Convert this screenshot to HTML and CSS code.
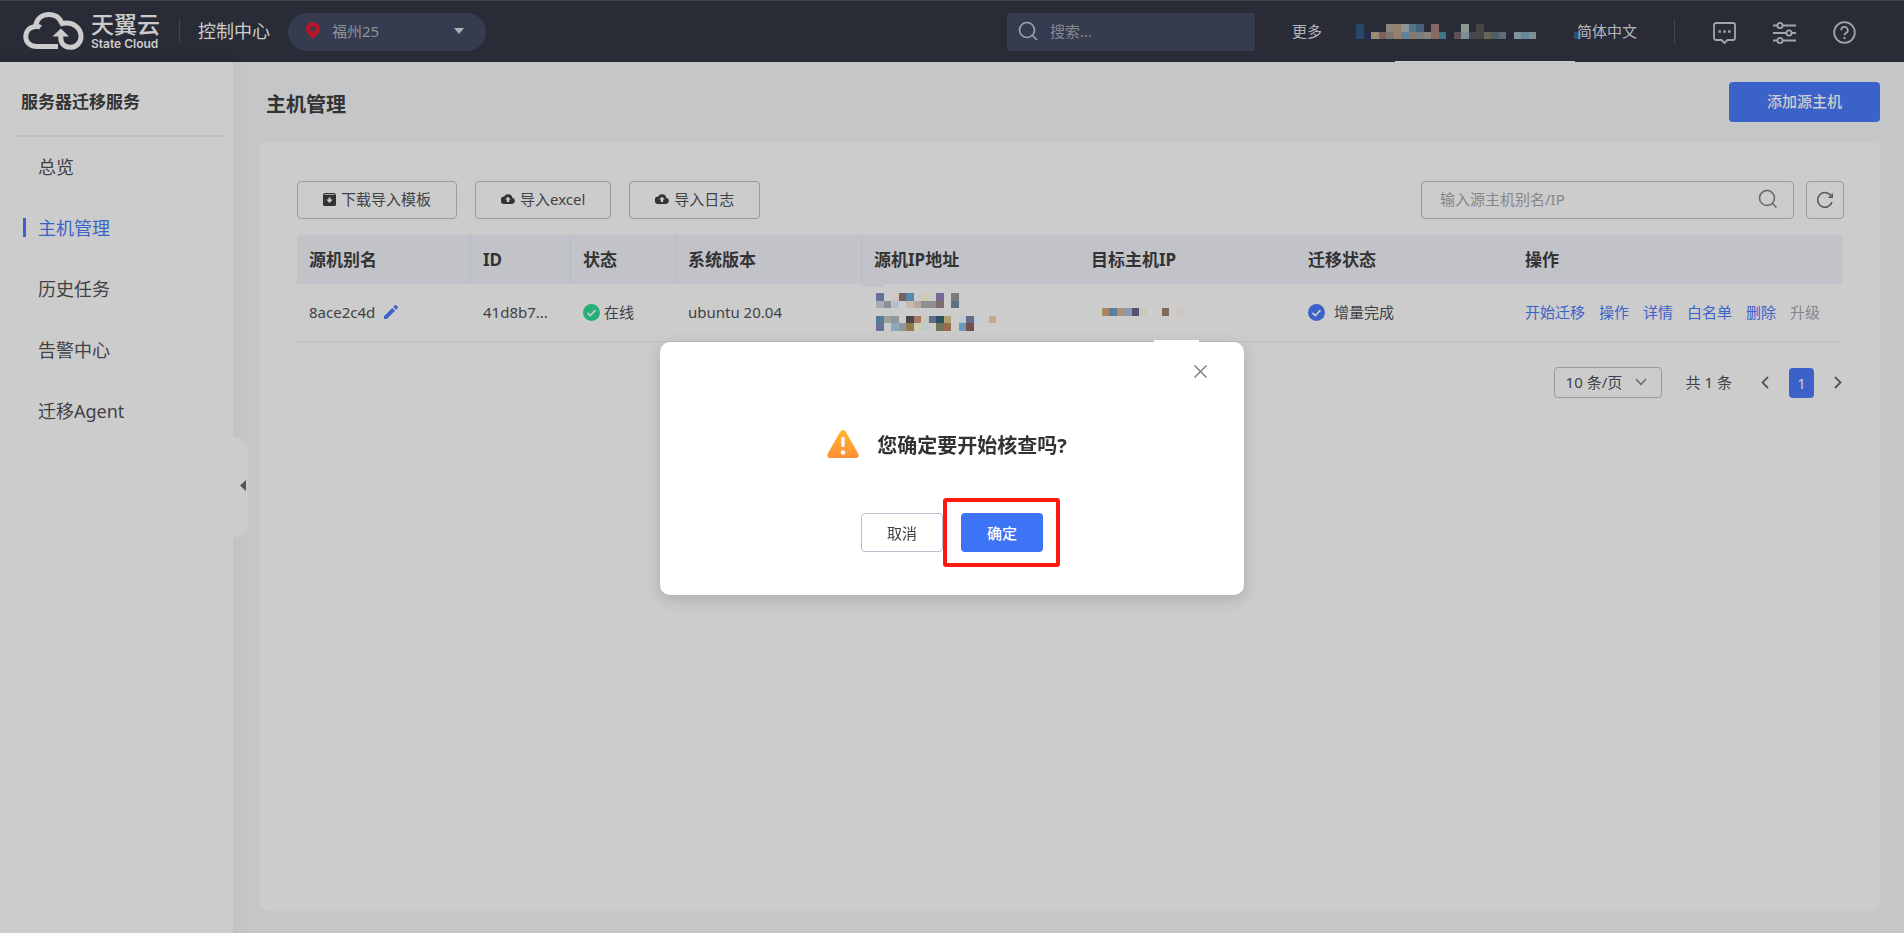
FILE: index.html
```html
<!DOCTYPE html>
<html lang="zh-CN">
<head>
<meta charset="utf-8">
<title>主机管理</title>
<link rel="stylesheet" href="styles.css">
</head>
<body>
<header class="topbar">
  <a class="logo" href="#">
    <svg width="61" height="38" viewBox="0 0 61 38" fill="none" stroke="#cccccc" stroke-width="5">
      <path d="M35 34.5H14C7 34.5 2.8 30 2.8 25C2.8 18.5 7 15 12.5 14.5C13.5 7 19 2.6 26 2.6C33 2.6 37 6.5 39 11.5M12.5 14.5C14 14 16 14.5 17.5 15.5M37 12C50 8.5 58 16 58 24.5C58 31 53 35.3 47.5 35.3C41 35.3 37.8 31 37.8 26V22"/>
      <path d="M37.8 16.5L46 24.5H29.5Z" fill="#cccccc" stroke="none"/>
    </svg>
    <span class="logo-text"><span class="logo-cn">天翼云</span><span class="logo-en">State Cloud</span></span>
  </a>
  <span class="divider"></span>
  <a class="console" href="#">控制中心</a>
  <button class="region" type="button">
    <svg width="14" height="17" viewBox="0 0 14 17"><path fill="#b8142c" fill-rule="evenodd" d="M7 0C3 0 0 3 0 6.8C0 10.500 3.500 13.500 7 17C10.500 13.500 14 10.500 14 6.800C14 3 11 0 7 0zM7 4.200a2.600 2.600 0 1 0 0 5.200a2.600 2.600 0 0 0 0-5.200z"/></svg>
    <span class="region-name">福州25</span>
    <svg width="10" height="6" viewBox="0 0 10 6"><path fill="#aeb0b6" d="M0 0h10L5 6z"/></svg>
  </button>
  <label class="global-search">
    <svg width="20" height="20" viewBox="0 0 20 20" fill="none" stroke="#a4a6ad" stroke-width="1.6"><circle cx="9" cy="9" r="7.5"/><path d="M14.5 14.5L19 19"/></svg>
    <input type="text" placeholder="搜索..." aria-label="搜索">
  </label>
  <a class="toplink" href="#">更多</a>
  <svg class="account" width="225" height="15" viewBox="0 0 30 2" shape-rendering="crispEdges">
    <rect x="0" width="1" height="2" fill="#26496b"/><rect x="1" y="1" width="1" height="1" fill="#252a4e"/><rect x="2" y="1" width="1" height="1" fill="#9c8b72"/><rect x="3" y="1" width="1" height="1" fill="#7d605f"/>
    <rect x="4" width="1" height="1" fill="#8b867f"/><rect x="4" y="1" width="1" height="1" fill="#7d7675"/><rect x="5" width="1" height="2" fill="#98806a"/><rect x="6" width="1" height="1" fill="#8a9699"/><rect x="6" y="1" width="1" height="1" fill="#5f8298"/>
    <rect x="7" width="1" height="1" fill="#547585"/><rect x="7" y="1" width="1" height="1" fill="#8a7866"/><rect x="8" width="1" height="1" fill="#4a5f7c"/><rect x="8" y="1" width="1" height="1" fill="#7b7b80"/><rect x="9" y="1" width="1" height="1" fill="#88837c"/>
    <rect x="10" width="1" height="2" fill="#866a63"/><rect x="11" y="1" width="1" height="1" fill="#417389"/><rect x="13" y="1" width="1" height="1" fill="#644f58"/><rect x="14" width="1" height="1" fill="#8d9994"/><rect x="14" y="1" width="1" height="1" fill="#7a909a"/>
    <rect x="15" y="1" width="1" height="1" fill="#464753"/><rect x="16" width="1" height="2" fill="#464648"/><rect x="17" y="1" width="1" height="1" fill="#6a6659"/><rect x="18" y="1" width="1" height="1" fill="#4c6165"/><rect x="19" y="1" width="1" height="1" fill="#646b78"/>
    <rect x="21" y="1" width="1" height="1" fill="#7e949d"/><rect x="22" y="1" width="1" height="1" fill="#66869a"/><rect x="23" y="1" width="1" height="1" fill="#84908f"/><rect x="29" y="1" width="1" height="1" fill="#2a526c"/>
  </svg>
  <a class="toplink lang" href="#">简体中文</a>
  <span class="divider tools-divider"></span>
  <div class="tools">
    <button type="button" aria-label="消息"><svg width="23" height="22" viewBox="0 0 23 22" fill="none" stroke="#a4a5ab" stroke-width="1.8"><path d="M3 1h17a2 2 0 0 1 2 2v13a2 2 0 0 1-2 2h-5.500L11.500 21l-3-3H3a2 2 0 0 1-2-2V3a2 2 0 0 1 2-2z"/><path d="M5.500 9.500h2.400M10.300 9.500h2.400M15.100 9.500h2.400" stroke-width="2.4"/></svg></button>
    <button type="button" aria-label="设置"><svg width="23" height="22" viewBox="0 0 23 22" fill="none" stroke="#a4a5ab" stroke-width="1.8"><path d="M0 3.500h4M10 3.500h13M0 11h13M19 11h4M0 18.500h4M10 18.500h13"/><circle cx="7" cy="3.5" r="2.6"/><circle cx="16" cy="11" r="2.6"/><circle cx="7" cy="18.5" r="2.6"/></svg></button>
    <button type="button" aria-label="帮助"><svg width="23" height="23" viewBox="0 0 23 23" fill="none" stroke="#a4a5ab" stroke-width="1.8"><circle cx="11.5" cy="11.5" r="10.3"/><path d="M8.200 9.200a3.300 3.300 0 1 1 4.900 2.800c-1.100.6-1.600 1.100-1.600 2.300"/><path d="M11.500 16v2"/></svg></button>
  </div>
</header>

<div class="layout">
  <aside class="sidebar">
    <h2 class="service">服务器迁移服务</h2>
    <nav class="menu">
      <a href="#">总览</a>
      <a href="#" class="active">主机管理</a>
      <a href="#">历史任务</a>
      <a href="#">告警中心</a>
      <a href="#">迁移Agent</a>
    </nav>
    <button class="collapse" type="button" aria-label="收起菜单"><svg width="6" height="11" viewBox="0 0 6 11"><path fill="#555" d="M6 0v11L0 5.500z"/></svg></button>
  </aside>

  <main class="main">
    <div class="page-head">
      <h1>主机管理</h1>
      <button class="add" type="button">添加源主机</button>
    </div>
    <section class="card">
      <div class="toolbar">
        <button class="btn" type="button"><svg width="13" height="13" viewBox="0 0 13 13"><path fill="#333" fill-rule="evenodd" d="M1.500 0h10L13 1.500v10a1.500 1.500 0 0 1-1.500 1.500h-10A1.500 1.500 0 0 1 0 11.500v-10zM1.500 1.200h10v.8h-10zM5.500 4.500v2H3.200l3.300 3.500 3.300-3.500H7.500v-2z"/></svg>下载导入模板</button>
        <button class="btn" type="button"><svg width="14" height="10" viewBox="0 0 14 10"><path fill="#333" fill-rule="evenodd" d="M11.300 3.700A4.400 4.400 0 0 0 3.100 2.600 3.700 3.700 0 0 0 3.500 10h7.600a3.200 3.200 0 0 0 .2-6.300zM8.200 5.600v2.500H5.800V5.600H4.200L7 2.800l2.800 2.800z"/></svg>导入excel</button>
        <button class="btn" type="button"><svg width="14" height="10" viewBox="0 0 14 10"><path fill="#333" fill-rule="evenodd" d="M11.300 3.700A4.400 4.400 0 0 0 3.100 2.600 3.700 3.700 0 0 0 3.500 10h7.600a3.200 3.200 0 0 0 .2-6.300zM8.200 5.600v2.500H5.800V5.600H4.200L7 2.800l2.800 2.800z"/></svg>导入日志</button>
        <label class="host-search">
          <input type="text" placeholder="输入源主机别名/IP" aria-label="输入源主机别名/IP">
          <svg width="20" height="20" viewBox="0 0 20 20" fill="none" stroke="#62646a" stroke-width="1.5"><circle cx="9" cy="9" r="7.5"/><path d="M14.500 14.500L18.500 18.500"/></svg>
        </label>
        <button class="refresh" type="button" aria-label="刷新"><svg width="18" height="18" viewBox="0 0 18 18" fill="none" stroke="#55575c" stroke-width="1.5"><path d="M15.300 5.200A7.300 7.300 0 1 0 16 11"/><path d="M16.200 2.500V6.200H12.500"/></svg></button>
      </div>

      <table class="hosts">
        <colgroup><col class="c-name"><col class="c-id"><col class="c-state"><col class="c-os"><col class="c-ip"><col class="c-ip"><col class="c-ip"><col></colgroup>
        <thead>
          <tr><th class="sep">源机别名</th><th class="sep">ID</th><th class="sep">状态</th><th class="sep">系统版本</th><th class="ip-head">源机IP地址</th><th>目标主机IP</th><th>迁移状态</th><th>操作</th></tr>
        </thead>
        <tbody>
          <tr>
            <td><span class="cell">8ace2c4d<button class="edit" type="button" aria-label="编辑"><svg width="14" height="14" viewBox="0 0 14 14" fill="#3b62c8"><path d="M0 11.200L8.300 2.900l2.800 2.800L2.800 14H0zM9.300 1.900L10.900.3a1 1 0 0 1 1.400 0l1.400 1.400a1 1 0 0 1 0 1.400l-1.600 1.600z"/></svg></button></span></td>
            <td>41d8b7...</td>
            <td><span class="cell tight"><svg width="17" height="17" viewBox="0 0 17 17"><circle cx="8.5" cy="8.5" r="8.5" fill="#25b07a"/><path d="M4.500 8.800l2.800 2.800 5.200-5.400" fill="none" stroke="#ccc" stroke-width="1.7"/></svg>在线</span></td>
            <td>ubuntu 20.04</td>
            <td>
              <svg class="masked" width="120" height="38" viewBox="0 0 16 5" preserveAspectRatio="none" shape-rendering="crispEdges">
                <rect x="0" width="1" height="1" fill="#66709a"/><rect x="2" width="1" height="1" fill="#cfc8c0"/><rect x="3" width="1" height="1" fill="#7a5f63"/><rect x="4" width="1" height="1" fill="#5888aa"/><rect x="6" width="1" height="1" fill="#cdc9b5"/><rect x="8" width="1" height="1" fill="#766795"/><rect x="10" width="1" height="1" fill="#767d80"/>
                <rect x="0" y="1" width="1" height="1" fill="#a5abb9"/><rect x="1" y="1" width="1" height="1" fill="#8f8f8f"/><rect x="2" y="1" width="1" height="1" fill="#b6c0c8"/><rect x="3" y="1" width="1" height="1" fill="#c3cfd3"/><rect x="4" y="1" width="1" height="1" fill="#c6bbab"/><rect x="5" y="1" width="1" height="1" fill="#bba6a3"/><rect x="6" y="1" width="2" height="1" fill="#8f8f8f"/><rect x="8" y="1" width="1" height="1" fill="#7b6f6d"/><rect x="10" y="1" width="1" height="1" fill="#5c7186"/>
                <rect x="0" y="3" width="1" height="1" fill="#557a98"/><rect x="1" y="3" width="1" height="1" fill="#9ba3a1"/><rect x="2" y="3" width="1" height="1" fill="#8f989b"/><rect x="4" y="3" width="1" height="1" fill="#434749"/><rect x="5" y="3" width="1" height="1" fill="#a57965"/><rect x="6" y="3" width="1" height="1" fill="#cbc8bd"/><rect x="7" y="3" width="1" height="1" fill="#5b6c8f"/><rect x="8" y="3" width="1" height="1" fill="#2f4f63"/><rect x="9" y="3" width="1" height="1" fill="#b39d72"/><rect x="11" y="3" width="1" height="1" fill="#bccace"/><rect x="12" y="3" width="1" height="1" fill="#606b86"/><rect x="13" y="3" width="1" height="1" fill="#c2cccd"/><rect x="15" y="3" width="1" height="1" fill="#c4aa8c"/>
                <rect x="0" y="4" width="1" height="1" fill="#66709a"/><rect x="2" y="4" width="1" height="1" fill="#8ba7bb"/><rect x="3" y="4" width="1" height="1" fill="#9393a3"/><rect x="4" y="4" width="1" height="1" fill="#8f7b4c"/><rect x="5" y="4" width="1" height="1" fill="#cfcdb2"/><rect x="6" y="4" width="1" height="1" fill="#bccbc9"/><rect x="8" y="4" width="1" height="1" fill="#6f7757"/><rect x="9" y="4" width="1" height="1" fill="#976b50"/><rect x="11" y="4" width="1" height="1" fill="#6a9ab9"/><rect x="12" y="4" width="1" height="1" fill="#774e50"/>
              </svg>
            </td>
            <td>
              <svg class="masked target" width="82" height="8" viewBox="0 0 11 1" preserveAspectRatio="none" shape-rendering="crispEdges"><rect x="0" width="1" height="1" fill="#a6875f"/><rect x="1" width="1" height="1" fill="#57809b"/><rect x="2" width="1" height="1" fill="#ac9070"/><rect x="3" width="1" height="1" fill="#879baa"/><rect x="4" width="1" height="1" fill="#57506a"/><rect x="5" width="1" height="1" fill="#c9c8bd"/><rect x="8" width="1" height="1" fill="#87675a"/><rect x="10" width="1" height="1" fill="#c9c6c2"/></svg>
            </td>
            <td><span class="cell"><svg width="17" height="17" viewBox="0 0 17 17"><circle cx="8.5" cy="8.5" r="8.5" fill="#3b62c8"/><path d="M4.500 8.800l2.800 2.800 5.200-5.400" fill="none" stroke="#ccc" stroke-width="1.7"/></svg>增量完成</span></td>
            <td><span class="actions"><a href="#">开始迁移</a><a href="#">操作</a><a href="#">详情</a><a href="#">白名单</a><a href="#">删除</a><span class="off">升级</span></span></td>
          </tr>
        </tbody>
      </table>

      <div class="pager">
        <span class="size"><select aria-label="每页条数"><option>10 条/页</option></select><svg width="12" height="8" viewBox="0 0 12 8" fill="none" stroke="#666" stroke-width="1.5"><path d="M1 1l5 5.500L11 1"/></svg></span>
        <span class="total">共 1 条</span>
        <button class="arrow" type="button" aria-label="上一页"><svg width="8" height="13" viewBox="0 0 8 13" fill="none" stroke="#555" stroke-width="1.8"><path d="M7 1L1.500 6.500L7 12"/></svg></button>
        <button class="page" type="button">1</button>
        <button class="arrow" type="button" aria-label="下一页"><svg width="8" height="13" viewBox="0 0 8 13" fill="none" stroke="#555" stroke-width="1.8"><path d="M1 1l5.500 5.500L1 12"/></svg></button>
      </div>
    </section>
  </main>
</div>

<div class="overlay">
  <div class="dialog" role="dialog" aria-modal="true" aria-labelledby="dialog-title">
    <button class="close" type="button" aria-label="关闭"><svg width="13" height="13" viewBox="0 0 13 13" stroke="#777" stroke-width="1.4"><path d="M.5.5l12 12M12.500.5l-12 12"/></svg></button>
    <div class="question">
      <svg width="32" height="28" viewBox="0 0 32 28"><defs><linearGradient id="warn" x1="0" y1="0" x2="0" y2="1"><stop offset="0" stop-color="#ffb52e"/><stop offset="1" stop-color="#ff8f36"/></linearGradient></defs><path fill="url(#warn)" d="M13.300 1.600a3.100 3.100 0 0 1 5.400 0l12.600 22.200c1.100 2-.2 4.200-2.500 4.200H3.200C.9 28-.4 25.800.7 23.800z"/><path d="M16 8.500v7" stroke="#fff" stroke-width="3.4" stroke-linecap="round"/><circle cx="16" cy="22.5" r="2.3" fill="#fff"/></svg>
      <h2 id="dialog-title">您确定要开始核查吗?</h2>
    </div>
    <div class="choices">
      <button class="cancel" type="button">取消</button>
      <span class="marked"><button class="ok" type="button">确定</button></span>
    </div>
  </div>
</div>
</body>
</html>
```
FILE: styles.css
```css
* { box-sizing: border-box; }
body {
  margin: 0;
  min-height: 100vh;
  display: flex;
  flex-direction: column;
  background: #c4c6c8;
  color: #414245;
  font: 15px/22px "Noto Sans", "Noto Sans CJK SC", sans-serif;
}
a { color: inherit; text-decoration: none; }
button, input, select { font: inherit; color: inherit; margin: 0; padding: 0; border: 0; background: none; }
button { cursor: pointer; }
h1, h2 { margin: 0; }
svg { display: block; flex: none; }
input { outline: 0; }

/* Top bar */
.topbar {
  position: relative;
  display: flex;
  align-items: center;
  height: 62px;
  padding: 0 48px 8px 23px;
  background: #292c37;
  border-top: 1px solid #41444f;
  color: #b4b5b9;
}
.topbar::after {
  content: "";
  position: absolute;
  left: 1395px;
  bottom: 0;
  width: 180px;
  height: 1px;
  background: #cccccc;
}
.logo { display: flex; align-items: center; gap: 7px; padding-top: 6px; color: #cccccc; }
.logo-text { display: flex; flex-direction: column; width: 70px; }
.logo-cn { font-size: 23px; line-height: 27px; font-weight: 500; }
.logo-en { font: 600 12px/12px "Inter", sans-serif; white-space: nowrap; }
.divider { width: 1px; height: 25px; margin: 8px 18px 0 18px; background: #41444e; }
.console { font-size: 18px; line-height: 26px; color: #cccccc; padding-top: 6px; }
.region {
  display: flex;
  align-items: center;
  width: 198px;
  height: 38px;
  margin: 8px 0 0 18px;
  padding: 0 22px 2px 18px;
  border-radius: 19px;
  background: #363c50;
  color: #8f9299;
  text-align: left;
}
.region-name { flex: 1; padding-left: 12px; }
.global-search {
  display: flex;
  align-items: center;
  gap: 12px;
  width: 248px;
  height: 38px;
  margin: 8px 0 0 auto;
  padding: 0 11px 2px;
  border-radius: 3px;
  background: #363c50;
}
.global-search input { flex: 1; min-width: 0; }
.global-search input::placeholder { color: #85888f; opacity: 1; }
.toplink { padding-top: 6px; margin-left: 37px; }
.account { margin: 8px -4px 0 34px; }
.lang { margin-left: 0; }
.tools-divider { margin: 8px 38px 0 37px; }
.tools { display: flex; align-items: center; gap: 37px; padding-top: 10px; }

/* Sidebar */
.layout { flex: 1; display: flex; }
.sidebar {
  position: relative;
  width: 233px;
  flex: none;
  padding: 0 11px 0 18px;
  background: #cccccc;
  box-shadow: 2px 0 14px rgba(0, 0, 40, 0.04);
}
.service {
  padding: 28px 3px 21px;
  border-bottom: 2px solid #b9bdc4;
  font-size: 17px;
  line-height: 24px;
  color: #333;
}
.menu { display: flex; flex-direction: column; }
.menu a { position: relative; padding-left: 20px; font-size: 18px; line-height: 61px; }
.menu .active { color: #3b62c8; }
.menu .active::before {
  content: "";
  position: absolute;
  left: 5px;
  top: 20px;
  width: 3px;
  height: 19px;
  background: #3b62c8;
}
.collapse {
  position: absolute;
  left: 100%;
  top: 375px;
  width: 15px;
  height: 100px;
  padding: 0 0 3px 7px;
  border-radius: 0 14px 14px 0;
  background: #cccccc;
}

/* Page */
.main { flex: 1; min-width: 0; display: flex; flex-direction: column; gap: 20px; padding: 20px 24px 22px 27px; }
.page-head { display: flex; align-items: center; justify-content: space-between; padding-left: 6px; }
.page-head h1 { padding-top: 6px; font-size: 20px; line-height: 28px; color: #333; }
.add { width: 151px; height: 40px; padding-bottom: 2px; border-radius: 4px; background: #3b62c8; color: #cccccc; font-weight: 500; }
.card { flex: 1; padding: 39px 38px 24px 37px; border-radius: 6px; background: #cccccc; }
.toolbar { display: flex; align-items: center; gap: 18px; margin: 0 -2px 16px 0; }
.btn {
  display: flex;
  align-items: center;
  gap: 5px;
  height: 38px;
  padding: 0 25px 2px;
  border: 1px solid #9a9ba2;
  border-radius: 4px;
}
.host-search {
  display: flex;
  align-items: center;
  width: 373px;
  height: 38px;
  margin-left: auto;
  padding: 0 15px 2px 18px;
  border: 1px solid #9a9ba2;
  border-radius: 4px;
}
.host-search input { flex: 1; min-width: 0; }
.host-search input::placeholder { color: #85868a; opacity: 1; }
.refresh {
  display: flex;
  align-items: center;
  justify-content: center;
  width: 38px;
  height: 38px;
  margin-left: -6px;
  border: 1px solid #9a9ba2;
  border-radius: 4px;
}

/* Host table */
.hosts { width: 100%; table-layout: fixed; border-collapse: separate; border-spacing: 0; }
.c-name { width: 174px; }
.c-id { width: 100px; }
.c-state { width: 105px; }
.c-os { width: 186px; }
.c-ip { width: 217px; }
.hosts th {
  height: 49px;
  padding: 0 0 0 12px;
  background: #c2c3c9;
  color: #333;
  font-size: 17px;
  text-align: left;
}
.hosts th:first-child { border-radius: 4px 0 0 0; }
.hosts .sep { border-right: 1px solid #b6bac8; }
.ip-head { position: relative; }
.ip-head::after {
  content: "";
  position: absolute;
  left: 0;
  top: 100%;
  width: 22px;
  height: 3px;
  background: #c2c3c9;
}
.hosts td { height: 58px; padding: 0 0 1px 12px; border-bottom: 1px solid #bfbfc0; }
.cell { display: flex; align-items: center; gap: 9px; }
.tight { gap: 4px; }
.masked { margin-left: 2px; }
.target { margin-left: 11px; }
.actions { display: flex; gap: 14px; color: #3b62c8; white-space: nowrap; }
.off { color: #85868a; }

/* Pagination */
.pager { display: flex; align-items: center; justify-content: flex-end; margin-top: 25px; }
.size { position: relative; }
.size select {
  display: block;
  appearance: none;
  width: 108px;
  height: 31px;
  padding: 0 0 2px 11px;
  border: 1px solid #9a9ba2;
  border-radius: 4px;
}
.size svg { position: absolute; right: 15px; top: 11px; pointer-events: none; }
.total { margin: 0 29px 0 24px; padding-bottom: 2px; }
.page {
  width: 25px;
  height: 30px;
  margin: 0 20px;
  border-radius: 4px;
  background: #3b62c8;
  color: #cccccc;
}

/* Confirmation dialog */
.overlay { position: fixed; inset: 0; display: flex; align-items: center; justify-content: center; padding-top: 4px; }
.dialog {
  position: relative;
  width: 584px;
  padding: 84px 0 43px;
  border-radius: 10px;
  background: #ffffff;
  box-shadow: 0 4px 16px rgba(0, 0, 0, 0.16);
}
.dialog::before {
  content: "";
  position: absolute;
  right: 45px;
  top: -2px;
  width: 45px;
  height: 2px;
  background: #ffffff;
}
.close { position: absolute; right: 37px; top: 23px; }
.question { display: flex; align-items: center; justify-content: center; gap: 18px; padding-right: 10px; }
.question h2 { padding-top: 4px; font-size: 20px; line-height: 32px; font-weight: 700; color: #333; }
.choices { display: flex; justify-content: center; gap: 18px; margin-top: 51px; }
.cancel, .ok { display: block; width: 82px; height: 39px; border-radius: 4px; }
.cancel { border: 1px solid #b9bfce; }
.ok { background: #3d73f5; color: #ffffff; font-weight: 500; }
.marked { position: relative; }
.marked::after {
  content: "";
  position: absolute;
  inset: -15px -17px -15px -18px;
  border: 4px solid #ff1a10;
  border-radius: 3px;
  pointer-events: none;
}
```
